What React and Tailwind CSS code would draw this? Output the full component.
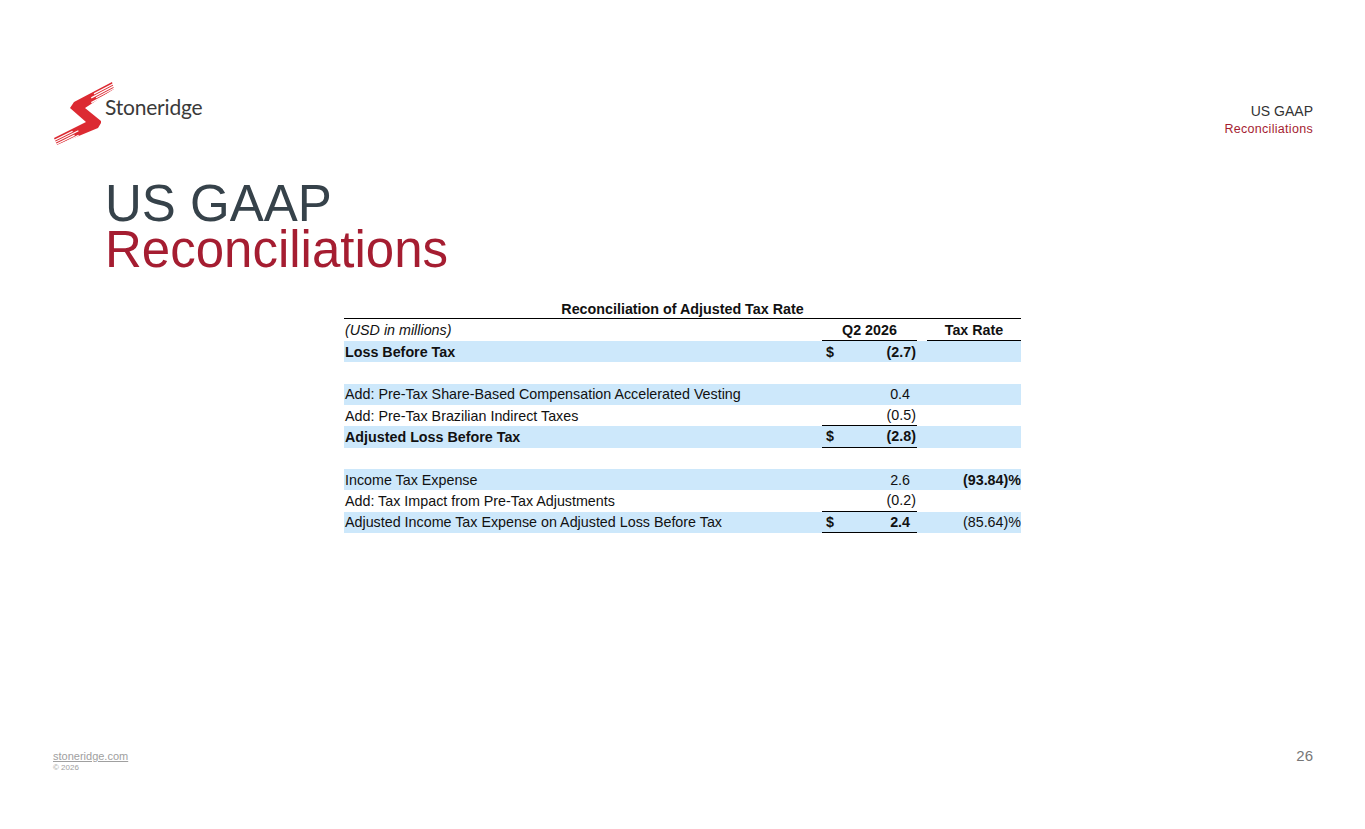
import React from "react";

const RED = "#a51d31";

function Logo() {
  const red = "#dc2a32";
  return (
    <div className="flex items-start h-[72px]">
      <svg width="76" height="72" viewBox="48 78 76 72" className="shrink-0">
        <polygon
          points="112,82 74,102 70,108 86,122 54,138 57,145 98,128 101,123 101,121 85,108 114,89"
          fill={red}
        />
        <g stroke="#ffffff" strokeWidth="1.2">
          <line x1="94" y1="93.9" x2="120.6" y2="79.95" />
          <line x1="91.25" y1="97.9" x2="121.65" y2="81.9" />
          <line x1="96.08" y1="97.84" x2="122.7" y2="83.8" />
          <line x1="91.3" y1="102.6" x2="123.6" y2="85.6" />
        </g>
        <g stroke="#ffffff" strokeWidth="1.2">
          <line x1="72.6" y1="131.2" x2="45.4" y2="144.8" />
          <line x1="78.4" y1="130.7" x2="46.4" y2="146.7" />
          <line x1="74.55" y1="135.1" x2="47.35" y2="148.7" />
          <line x1="78.6" y1="135.3" x2="48.2" y2="150.5" />
        </g>
      </svg>
      <div className="ml-[-19px] mt-[16px] text-[21px] leading-[26px] text-[#3a3a3a] font-['Lato',sans-serif] tracking-[-0.2px]">
        Stoneridge
      </div>
    </div>
  );
}

function Row({ label, bold, bg, dollar, val, valBold, positive, under, rate, rateBold }) {
  return (
    <div
      className={
        "flex h-[21.33px] items-center text-[14.3px] leading-[16px] text-[#111] " +
        (bg ? "bg-[#cde8fb]" : "bg-white")
      }
    >
      <div className={"w-[478px] pl-[1px] whitespace-nowrap " + (bold ? "font-bold" : "")}>{label}</div>
      <div
        className={
          "w-[95px] h-full flex items-center justify-between pl-[4px] box-border " +
          (under ? "border-b-[1.5px] border-black" : "") +
          (positive ? " pr-[7px]" : " pr-[1px]") +
          (valBold ? " font-bold" : "")
        }
      >
        <span className="font-bold">{dollar ? "$" : ""}</span>
        <span>{val}</span>
      </div>
      <div className="w-[10px]" />
      <div className={"w-[94px] text-right " + (rateBold ? "font-bold" : "")}>{rate}</div>
    </div>
  );
}

export default function App() {
  return (
    <div className="w-[1365px] h-[829px] bg-white flex flex-col font-['Liberation_Sans',Arial,sans-serif] overflow-hidden">
      <div className="flex justify-between pl-[48px] pr-[52px] pt-[78px]">
        <Logo />
        <div className="pt-[25px] text-right">
          <div className="text-[14px] leading-[16px] text-[#333]">US GAAP</div>
          <div className="text-[12.5px] leading-[20px] tracking-[0.3px]" style={{ color: RED }}>
            Reconciliations
          </div>
        </div>
      </div>

      <div className="pl-[105px] mt-[31px] text-[51px] leading-[46px]">
        <div className="text-[#36424a]">US GAAP</div>
        <div style={{ color: RED }}>Reconciliations</div>
      </div>

      <div className="ml-[344px] w-[677px] mt-[28px]">
        <div className="h-[18px] leading-[17px] text-center text-[14.3px] font-bold text-[#111] border-b-[1.5px] border-black box-border">
          Reconciliation of Adjusted Tax Rate
        </div>
        <div className="flex h-[22px] items-center text-[14.3px] leading-[16px] text-[#111]">
          <div className="w-[478px] pl-[1px] italic">(USD in millions)</div>
          <div className="w-[95px] h-full flex items-center justify-center font-bold border-b-[1.5px] border-black box-border">
            Q2 2026
          </div>
          <div className="w-[10px]" />
          <div className="w-[94px] h-full flex items-center justify-center font-bold border-b-[1.5px] border-black box-border">
            Tax Rate
          </div>
        </div>
        <Row label="Loss Before Tax" bold bg dollar val="(2.7)" valBold />
        <Row label="" />
        <Row label="Add: Pre-Tax Share-Based Compensation Accelerated Vesting" bg val="0.4" positive />
        <Row label="Add: Pre-Tax Brazilian Indirect Taxes" val="(0.5)" under />
        <Row label="Adjusted Loss Before Tax" bold bg dollar val="(2.8)" valBold under />
        <Row label="" />
        <Row label="Income Tax Expense" bg val="2.6" positive rate="(93.84)%" rateBold />
        <Row label="Add: Tax Impact from Pre-Tax Adjustments" val="(0.2)" under />
        <Row
          label="Adjusted Income Tax Expense on Adjusted Loss Before Tax"
          bg
          dollar
          val="2.4"
          valBold
          positive
          under
          rate="(85.64)%"
        />
      </div>

      <div className="mt-auto flex justify-between items-start pl-[53px] pr-[52px] pb-[56px]">
        <div>
          <div className="text-[11px] leading-[14px] text-[#a0a0a0] underline">stoneridge.com</div>
          <div className="text-[8px] leading-[10px] text-[#a0a0a0]">© 2026</div>
        </div>
        <div className="text-[15px] leading-[16px] text-[#777] mt-[-1px]">26</div>
      </div>
    </div>
  );
}
